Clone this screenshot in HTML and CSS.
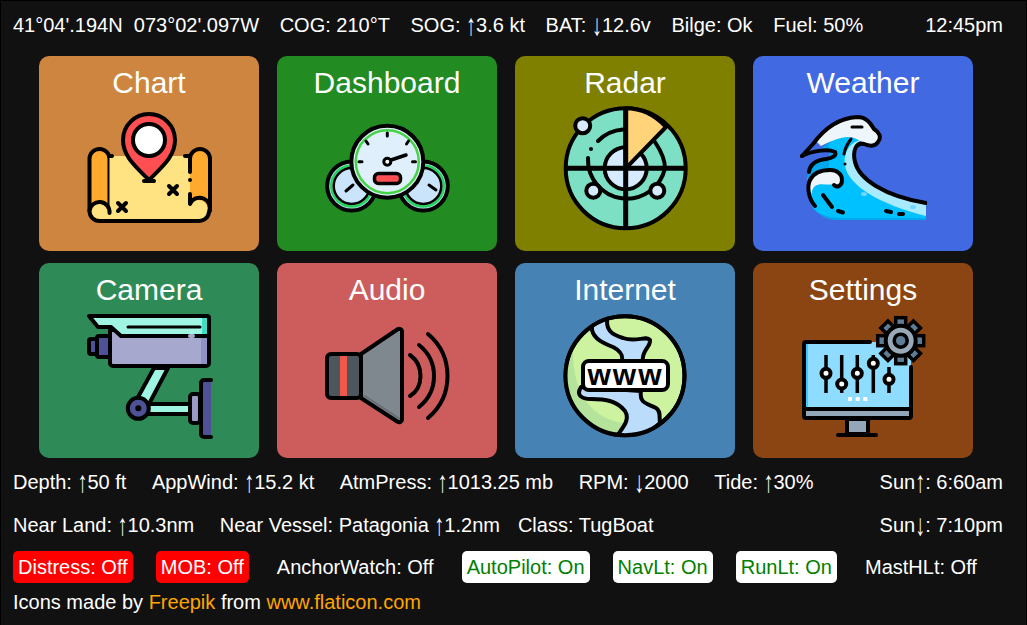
FILE: index.html
```html
<!DOCTYPE html>
<html lang="en">
<head>
    <meta charset="UTF-8">
    <meta name="viewport" content="width=device-width, initial-scale=1.0">
    <title>Boat Console</title>
    <link rel="stylesheet" href="styles.css">
</head>
<body>

    <!-- Position and boat status -->
    <div class="top-row">
        <span>41°04'.194N&nbsp;&nbsp;073°02'.097W</span>
        <span>COG: 210°T</span>
        <span>SOG: <i class="arrow">↑</i>3.6 kt</span>
        <span>BAT: <i class="arrow">↓</i>12.6v</span>
        <span>Bilge: Ok</span>
        <span>Fuel: 50%</span>
        <span class="push-right">12:45pm</span>
    </div>

    <!-- App tiles -->
    <div class="tiles">
        <div class="tile chart">
            <div class="tile-title">Chart</div>
            <svg class="icon" viewBox="0 0 128 128">
                <path fill="#ffa92e" d="M4.5 107V55a10 10 0 0 1 20 0v55z"/>
                <path fill="#ffa92e" stroke="none" d="M105 55a10 10 0 0 1 20 0v50h-20z"/>
                <path fill="#ffe282" stroke="none" d="M4.5 107a10 10 0 0 1 20 0V52H105v48a10 10 0 0 1 18 7 a10 10 0 0 1-10 10H14.5a10 10 0 0 1-10-10z"/>
                <path fill="none" d="M4.5 107a10 10 0 0 1 20 2M4.5 107a10 10 0 0 0 10 10H113a10 10 0 0 0 11-9 a10 10 0 0 0-19-8V90M105 68V55a10 10 0 0 1 20 0v52M24 52h3M100 52h5"/>
                <path fill="none" d="M105 76v.1M84 82l8 8M92 82l-8 8M33 99l8 8M41 99l-8 8"/>
                <path fill="#ff4f52" d="M64 76C50 62 38 52 38 36a26 26 0 0 1 52 0C90 52 78 62 64 76z"/>
                <path fill="none" d="M59 77h10"/>
                <circle cx="64" cy="36" r="16" fill="#fff"/>
            </svg>
        </div>

        <div class="tile dashboard">
            <div class="tile-title">Dashboard</div>
            <svg class="icon" viewBox="0 0 128 128">
                <circle cx="28.7" cy="82" r="24.500" fill="#cae4fb"/>
                <circle cx="100.3" cy="82" r="24.500" fill="#cae4fb"/>
                <circle cx="28.7" cy="82" r="20.500" fill="none" stroke="#27d35f" stroke-width="2.500"/>
                <circle cx="100.3" cy="82" r="20.500" fill="none" stroke="#27d35f" stroke-width="2.500"/>
                <circle cx="28.7" cy="82" r="18" fill="#cae4fb" stroke-width="2.500"/>
                <circle cx="100.3" cy="82" r="18" fill="#cae4fb" stroke-width="2.500"/>
                <path fill="none" stroke-width="3" d="M23 87l7-6M106 81l7 5"/>
                <circle cx="64.3" cy="57.7" r="36" fill="#dff0fc"/>
                <circle cx="64.3" cy="57.7" r="31.500" fill="none" stroke="#45d445" stroke-width="2.500"/>
                <path fill="none" stroke-width="3" d="M64.3 29v3M43 37l2 3M85.500 37l-2 3M36 57.700h3M89.500 57.700h3"/>
                <path fill="none" stroke-width="3.500" d="M68 56l15-5"/>
                <circle cx="64.300" cy="57.700" r="3.500" fill="#fff" stroke-width="3"/>
                <rect x="51.500" y="69.500" width="26" height="10" rx="4" fill="#ff4f52" stroke-width="3.500"/>
            </svg>
        </div>

        <div class="tile radar">
            <div class="tile-title">Radar</div>
            <svg class="icon" viewBox="0 0 128 128">
                <circle cx="64.700" cy="64.300" r="60" fill="#7de0c4"/>
                <circle cx="64.700" cy="64.300" r="21" fill="#d6ebff"/>
                <path fill="none" d="M37 37A39 39 0 0 1 62 25.500M27 54A39 39 0 0 0 104 64.300C104 56 100 47 94 38M30 45v.1"/>
                <path fill="#ffd37a" d="M64.700 64.300V4.300C80 4.300 94 11 105 23z"/>
                <path fill="none" stroke-width="5" stroke-linecap="butt" d="M64.700 4.300v120M4.700 64.300h120"/>
                <circle cx="21.700" cy="21.700" r="7.500" fill="#d6ebff"/>
                <circle cx="32.300" cy="86.700" r="7" fill="#d6ebff"/>
                <circle cx="96.300" cy="86.700" r="7" fill="#d6ebff"/>
            </svg>
        </div>

        <div class="tile weather">
            <div class="tile-title">Weather</div>
            <svg class="icon" viewBox="0 0 128 128">
                <path fill="#00c1ff" stroke="none" d="M127 98C100 92 70 84 58 62 52 50 56 42 62 36L40 30 22 45C30 46 36 50 33 53 25 57 15 56 10 66 6 80 8 100 18 108 25 114 32 116 40 116H127z"/>
                <path fill="#00a8ee" stroke="none" d="M40 30L22 45C30 46 36 50 33 53 25 57 15 56 10 66 8 72 8 80 9 86L30 66V40zM18 108C25 114 32 116 40 116H127V114H45C35 114 25 112 18 108z"/>
                <path fill="#a8eaff" stroke="none" d="M127 98C100 92 70 84 58 62 52 50 56 42 62 36 50 38 44 50 46 62 50 82 80 100 127 112z"/>
                <path fill="#eef6fb" stroke="none" d="M16 36C25 25 40 14 58 13 68 13 72 20 75 25 80 28 83 33 79 38 76 43 70 42 65 40 60 36 56 33 48 33 38 34 30 38 22 42z"/>
                <path fill="none" d="M3 52L14 40C25 25 40 14 58 13 68 13 72 20 75 25 80 28 83 33 79 38 76 43 70 42 65 40 58 38 53 45 56 58 60 75 85 92 127 99"/>
                <path fill="none" d="M3 52C15 46 30 45 36 48 38 52 33 54 27 55 18 56 11 60 10 68"/>
                <path fill="none" stroke-width="3" d="M53 23h10"/>
                <path fill="#eef6fb" stroke="none" d="M10 84C9 72 20 66 31 66 40 66 44 70 43 78 40 84 36 82 34 80 28 82 22 78 16 82 12 86 12 92 13 95z"/>
                <path fill="none" d="M16 102C9 94 8 82 11 76 15 68 24 66 31 66 38 66 43 70 43 76 43 82 38 84 35 81M24 91l9 12M39 107l5 1.500M87 107l5 1M100 110h4"/>
                <path fill="none" stroke-width="3" d="M52 35C49 39 46 44 45 50M46 60v.100"/>
                <ellipse cx="65" cy="90" rx="3" ry="2" fill="#6fd8ff" stroke="none"/>
                <ellipse cx="114" cy="103" rx="3" ry="2" fill="#6fd8ff" stroke="none"/>
            </svg>
        </div>

        <div class="tile camera">
            <div class="tile-title">Camera</div>
            <svg class="icon" viewBox="0 0 128 128">
                <path fill="#a0f5e2" d="M69 57L52 88l12 5L83 57z"/>
                <path fill="#a0f5e2" d="M62 93h43v10H62z"/>
                <rect x="105" y="83" width="10" height="29" rx="3" fill="#9a9bc5"/>
                <path fill="#4e5196" d="M126 69h-7a3 3 0 0 0-3 3v51a3 3 0 0 0 3 3h7"/>
                <circle cx="53.300" cy="97.300" r="10.500" fill="#4e5196"/>
                <circle cx="53.300" cy="97.300" r="1.500" fill="#2e3070" stroke-width="3"/>
                <rect x="4" y="28" width="10" height="15" rx="2" fill="#4e5196"/>
                <rect x="12" y="25" width="14" height="21" rx="2" fill="#4e5196"/>
                <path fill="#a6a8cd" d="M25 19h99v33a3 3 0 0 1-3 3H28a3 3 0 0 1-3-3z"/>
                <path fill="#8f92c6" stroke="none" d="M116 26h6v27h-6z"/>
                <path fill="#a0f5e2" d="M4 5H122a2 2 0 0 1 2 2V25H36L26 16H13z"/>
                <path fill="#3ce0c8" stroke="none" d="M117 7h5v16h-5z"/>
                <path fill="none" stroke-width="3" d="M43 16h72"/>
                <path fill="none" stroke="#a6a8cd" d="M105 25h3"/>
            </svg>
        </div>

        <div class="tile audio">
            <div class="tile-title">Audio</div>
            <svg class="icon" viewBox="0 0 128 128">
                <rect x="4" y="43" width="34" height="44" rx="4" fill="#4d555d"/>
                <path fill="#f0594a" stroke="none" d="M17 45h7v40h-7z"/>
                <path fill="#80888f" d="M38 43L75 18a3 3 0 0 1 4 2V109a3 3 0 0 1-4 2L38 87z"/>
                <path fill="#666d73" stroke="none" d="M40 85l2-1 35 23v2z"/>
                <path fill="none" d="M87 44C101 54 101 76 87 85M96 34C116 50 116 80 96 96M105 23C131 45 131 85 105 107"/>
            </svg>
        </div>

        <div class="tile internet">
            <div class="tile-title">Internet</div>
            <svg class="icon" viewBox="0 0 128 128">
                <clipPath id="globe"><circle cx="64" cy="64.700" r="59.500"/></clipPath>
                <circle cx="64" cy="64.700" r="59.500" fill="#cdf2a0"/>
                <g clip-path="url(#globe)">
                    <path fill="#b5e39c" stroke="none" d="M4 64C4 90 25 115 55 125L62 112C35 108 12 88 12 40z"/>
                    <path fill="#bcdcfb" d="M31 19C33 28 42 32 52 36 60 40 62 44 61 50H82C80 40 90 36 89 29 85 24 75 32 62 27 52 24 43 20 47 3H31z"/>
                    <path fill="#bcdcfb" d="M20 76C15 84 20 88 30 88 45 88 56 90 64 100 70 110 60 118 54 128H80L99 112C98 105 100 100 95 97 85 92 78 92 80 80z"/>
                </g>
                <circle cx="64" cy="64.700" r="59.500" fill="none"/>
                <rect x="22" y="50" width="85" height="29" rx="6" fill="#fff"/>
                <text class="www" x="64.500" y="74" stroke="none" text-anchor="middle">www</text>
            </svg>
        </div>

        <div class="tile settings">
            <div class="tile-title">Settings</div>
            <svg class="icon" viewBox="0 0 128 128">
                <path fill="#8edcff" stroke="none" d="M5 31H112V98H5z"/>
                <path fill="#3fc5ff" stroke="none" d="M5 31h4v67H5z"/>
                <path fill="#94a7b8" d="M5 98H112V105a2 2 0 0 1-2 2H7a2 2 0 0 1-2-2z"/>
                <path fill="none" d="M71 31H7a2 2 0 0 0-2 2V98M112 56V98"/>
                <path fill="#94a7b8" d="M48 108h21v15H48z"/>
                <path fill="none" d="M39 124h38"/>
                <path fill="none" stroke-width="3.500" stroke-linecap="butt" d="M27 44V82M42.700 44V82M58.300 44V82M74.300 44V82M90 56V82"/>
                <circle cx="27" cy="62.300" r="4.500" fill="#fff"/>
                <circle cx="42.700" cy="73" r="4.500" fill="#fff"/>
                <circle cx="58.300" cy="62.300" r="4.500" fill="#fff"/>
                <circle cx="74.300" cy="52.300" r="4.500" fill="#fff"/>
                <circle cx="90" cy="68.300" r="4.500" fill="#fff"/>
                <path fill="#fff" stroke="none" d="M49 86h4v4h-4zM56.700 86h4v4h-4zM64.300 86h4v4h-4z"/>
                <g transform="translate(101.700 29.700)">
                    <g fill="#607d96" stroke-linecap="butt" stroke-linejoin="miter" stroke-width="3.500">
                        <rect x="-5" y="-23" width="10" height="9"/>
                        <rect x="-5" y="-23" width="10" height="9" transform="rotate(45)"/>
                        <rect x="-5" y="-23" width="10" height="9" transform="rotate(90)"/>
                        <rect x="-5" y="-23" width="10" height="9" transform="rotate(135)"/>
                        <rect x="-5" y="-23" width="10" height="9" transform="rotate(180)"/>
                        <rect x="-5" y="-23" width="10" height="9" transform="rotate(225)"/>
                        <rect x="-5" y="-23" width="10" height="9" transform="rotate(270)"/>
                        <rect x="-5" y="-23" width="10" height="9" transform="rotate(315)"/>
                    </g>
                    <circle r="15" fill="#9aa9b8"/>
                    <circle r="6.500" fill="#607d96" stroke-width="3.500"/>
                </g>
            </svg>
        </div>
    </div>

    <!-- Sensors -->
    <div class="info-row first">
        <span>Depth: <i class="arrow">↑</i>50 ft</span>
        <span>AppWind: <i class="arrow">↑</i>15.2 kt</span>
        <span>AtmPress: <i class="arrow">↑</i>1013.25 mb</span>
        <span>RPM: <i class="arrow">↓</i>2000</span>
        <span>Tide: <i class="arrow">↑</i>30%</span>
        <span class="push-right">Sun<i class="arrow">↑</i>: 6:60am</span>
    </div>
    <div class="info-row second">
        <span>Near Land: <i class="arrow">↑</i>10.3nm</span>
        <span>Near Vessel: Patagonia <i class="arrow">↑</i>1.2nm</span>
        <span class="tight">Class: TugBoat</span>
        <span class="push-right">Sun<i class="arrow">↓</i>: 7:10pm</span>
    </div>

    <!-- Switches -->
    <div class="switch-row">
        <span class="switch alarm">Distress: Off</span>
        <span class="switch alarm">MOB: Off</span>
        <span class="switch">AnchorWatch: Off</span>
        <span class="switch on">AutoPilot: On</span>
        <span class="switch on">NavLt: On</span>
        <span class="switch on">RunLt: On</span>
        <span class="switch">MastHLt: Off</span>
    </div>

    <div class="credits">Icons made by <a href="#">Freepik</a> from <a href="#">www.flaticon.com</a></div>

</body>
</html>
```

FILE: styles.css
```css
/* Base Styling */
html, body {
    height: 100%;
}

body {
    margin: 0;
    overflow: hidden;
    background-color: #111;
    color: #fff;
    font-family: "Liberation Sans", Arial, sans-serif;
    font-size: 20px;
    box-sizing: border-box;
    border: 1px solid #000;
    border-bottom: none;
}

.push-right {
    margin-left: auto;
}

/* the arrows are much taller in the original font */
.arrow {
    display: inline-block;
    font-style: normal;
    transform: scaleY(1.5);
}

/* Top status bar */
.top-row {
    display: flex;
    gap: 20.6px;
    align-items: center;
    height: 48px;
    padding: 0 23px 0 12px;
}

/* Tiles */
.tiles {
    display: grid;
    grid-template-columns: repeat(4, 220px);
    grid-auto-rows: 195px;
    gap: 12px 18px;
    margin: 7px 0 0 38px;
}

.tile {
    border-radius: 10px;
    padding-top: 10px;
    box-sizing: border-box;
}

.tile-title {
    font-size: 30px;
    line-height: 34px;
    text-align: center;
}

.chart { background-color: peru; }
.dashboard { background-color: forestgreen; }
.radar { background-color: olive; }
.weather { background-color: royalblue; }
.camera { background-color: seagreen; }
.audio { background-color: indianred; }
.internet { background-color: steelblue; }
.settings { background-color: saddlebrown; }

.icon {
    display: block;
    width: 128px;
    height: 128px;
    margin: 4px auto 0;
    stroke: #000;
    stroke-width: 4;
    stroke-linecap: round;
    stroke-linejoin: round;
}

.www {
    font-family: "Liberation Sans", Arial, sans-serif;
    font-size: 30px;
    font-weight: bold;
    letter-spacing: 2px;
}

/* Sensor rows */
.info-row {
    display: flex;
    gap: 25.5px;
    align-items: center;
    padding: 0 23px 0 12px;
    height: 43px;
}

.info-row.first {
    margin-top: 3px;
}

.tight {
    margin-left: -7.5px;
}

/* Switch row */
.switch-row {
    display: flex;
    gap: 23.1px;
    padding-left: 12px;
    margin-top: 4px;
}

.switch {
    padding: 0 5px;
    height: 32px;
    line-height: 32px;
    border-radius: 5px;
}

.alarm {
    background-color: red;
}

.on {
    background-color: #fff;
    color: green;
}

.credits {
    margin: 3px 0 0 12px;
    line-height: 32px;
}

.credits a {
    color: orange;
    text-decoration: none;
}
```
